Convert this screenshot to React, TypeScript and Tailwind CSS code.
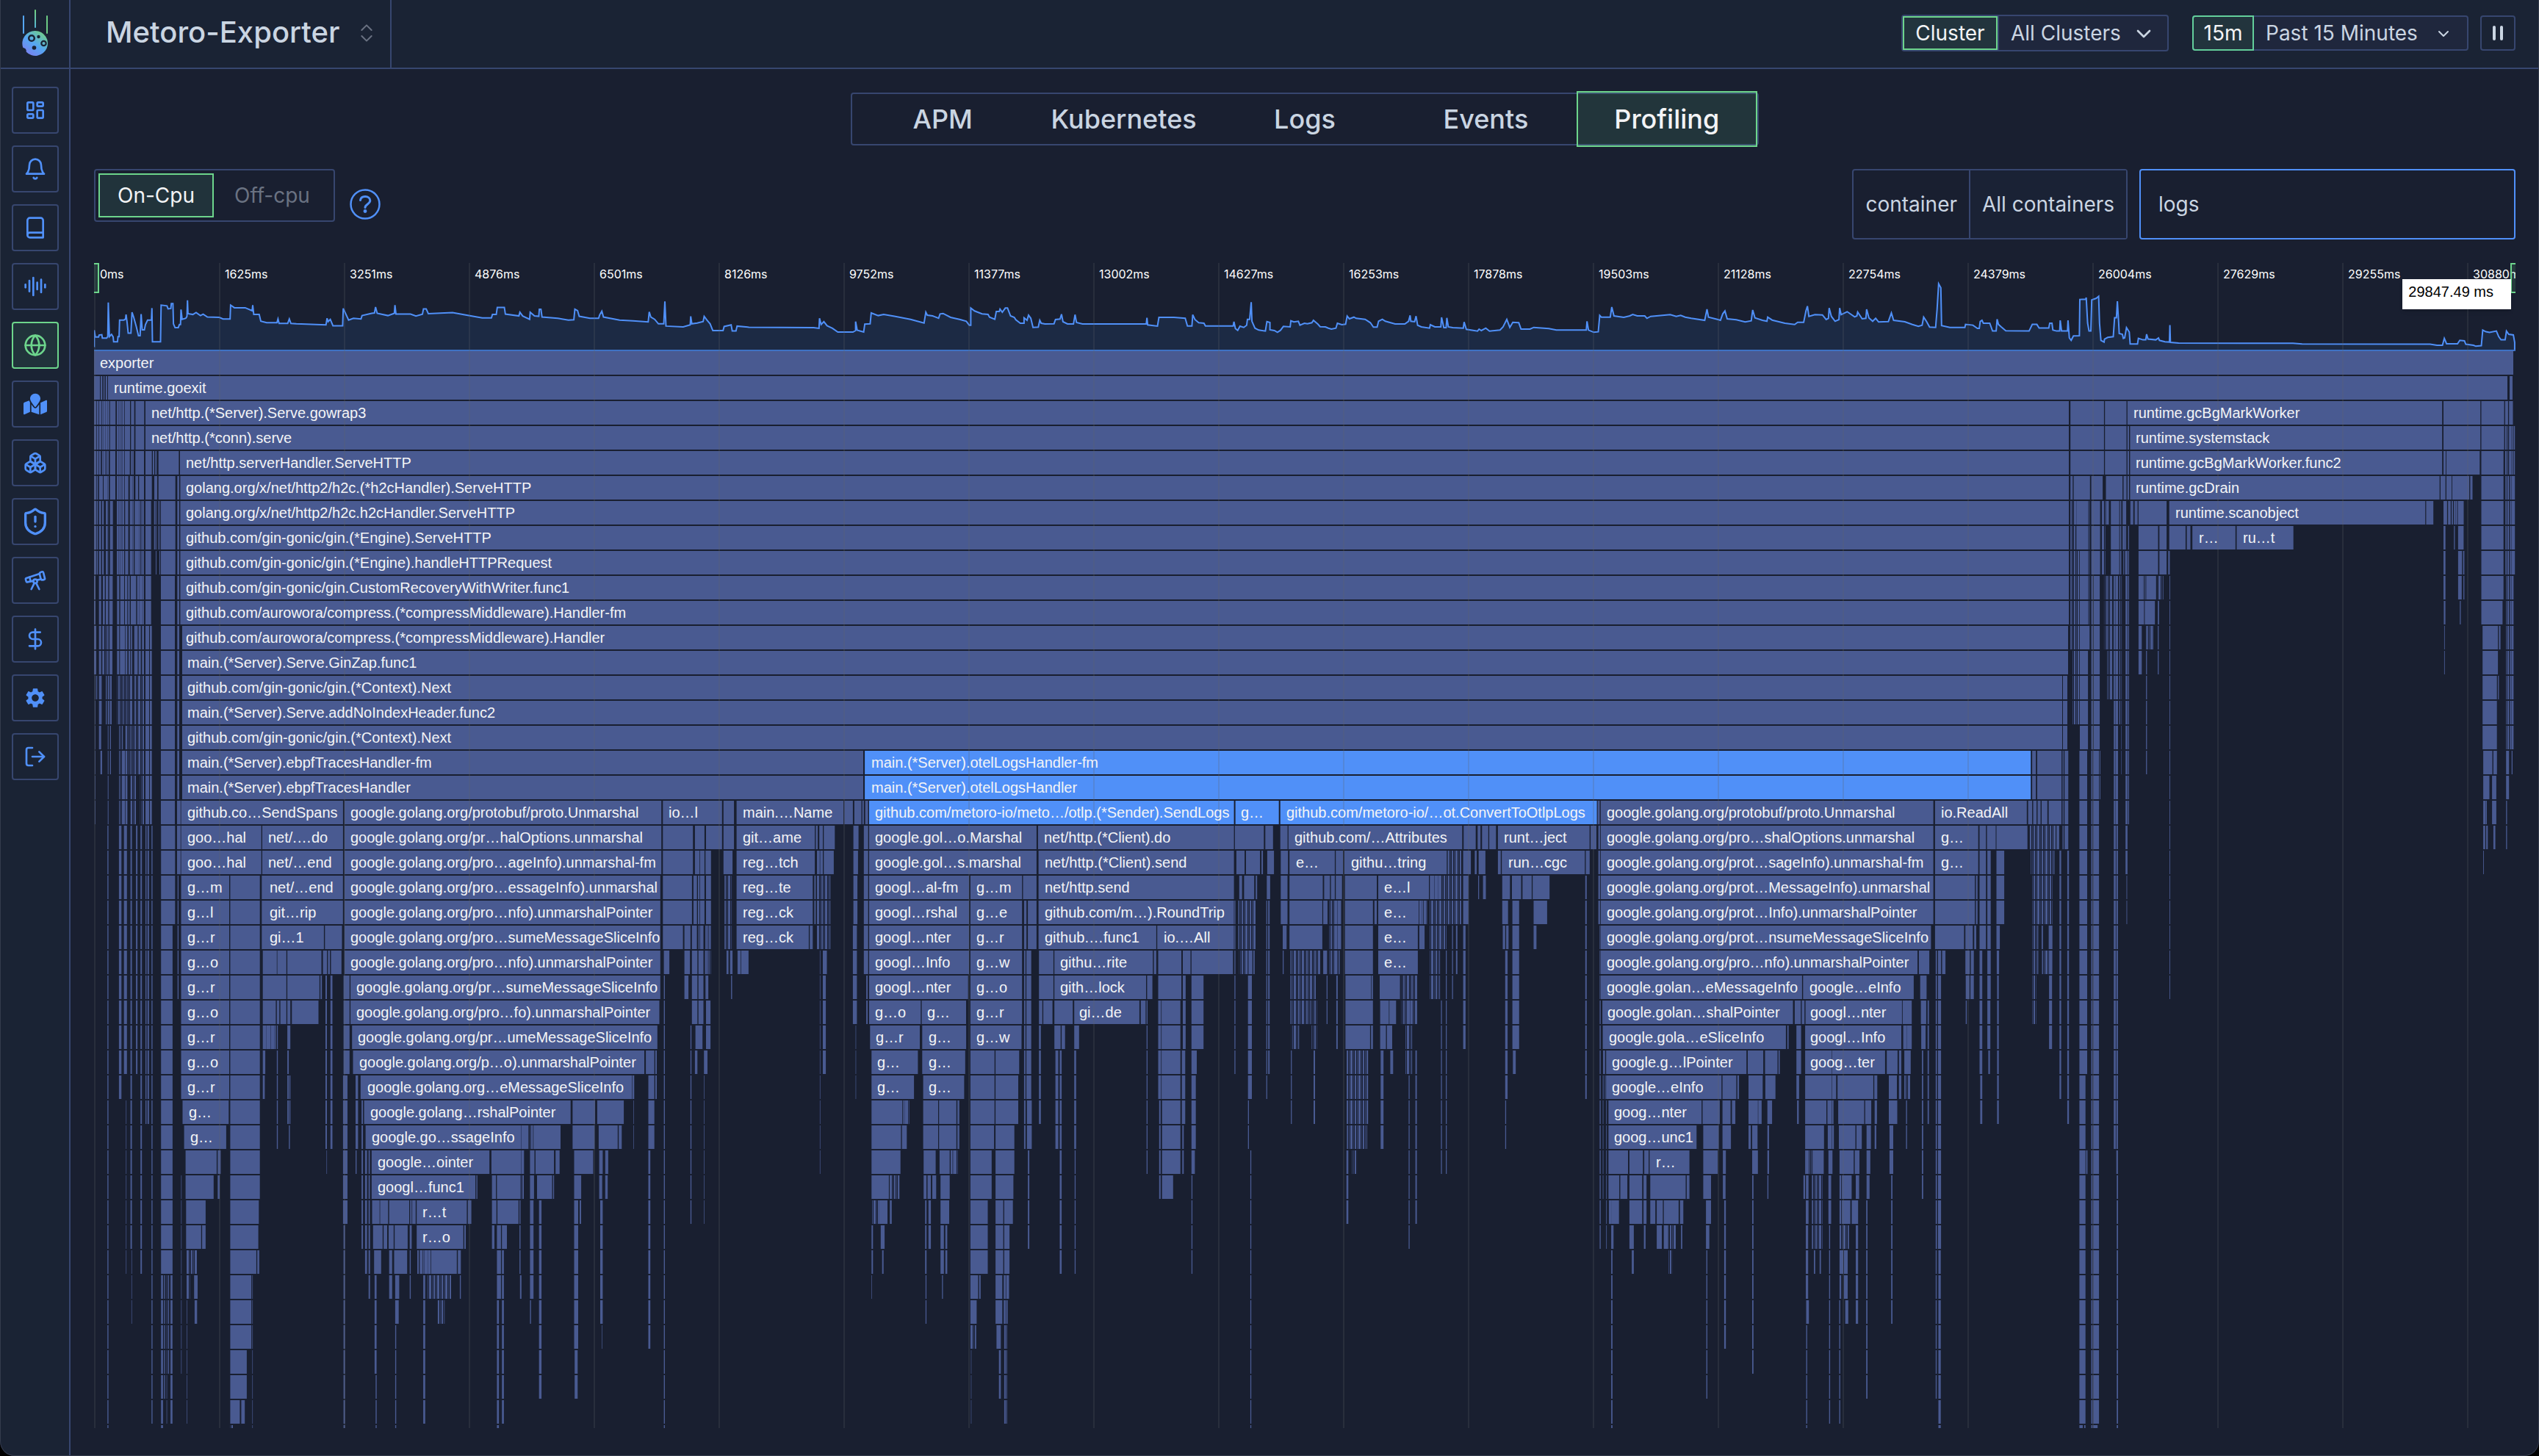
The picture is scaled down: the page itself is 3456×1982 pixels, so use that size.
import React, { FC, ReactNode } from "react";
import {
  AudioLines,
  Boxes,
  ChevronDown,
  ChevronsUpDown,
  DollarSign,
  Globe,
  LogOut,
  ShieldAlert,
  Telescope,
} from "lucide-react";
import { TbLayoutDashboard } from "react-icons/tb";
import { FaMapMarked } from "react-icons/fa";
import { MdSettings } from "react-icons/md";

const WIDTH = 3296;
const HEIGHT = 1586;
const FLAME_TOP = 120;
const ROW = 34;
const TICK = 170;

const ticks = [
  0, 1625, 3251, 4876, 6501, 8126, 9752, 11377, 13002, 14627, 16253, 17878, 19503, 21128, 22754,
  24379, 26004, 27629, 29255, 30880,
];

// A slice of the flame graph. Frames are "from to firstRow lastRow" in slice units.
type Slice = {
  start: number;
  scale: number;
  frames?: string;
  hot?: string;
  striped?: string;
  cuts?: string;
  labels?: [number, number, string][];
};

const slices: Slice[] = [
  {
    start: -128,
    scale: 1,
    frames: `128 3421 0,128 3413 1,3416 3420 1,198 2816 2 3,245 2816 4 10,248 2815 11 12,
      248 2807 13 15,2808 2814 13 15,248 1175 16 17`,
    cuts: `136 137 1,139 140 1,141 142 1,143 144 1,146 147 1`,
    labels: [
      [136, 0, "exporter"],
      [155, 1, "runtime.goexit"],
      [206, 2, "net/http.(*Server).Serve.gowrap3"],
      [206, 3, "net/http.(*conn).serve"],
      [253, 4, "net/http.serverHandler.ServeHTTP"],
      [253, 5, "golang.org/x/net/http2/h2c.(*h2cHandler).ServeHTTP"],
      [253, 6, "golang.org/x/net/http2/h2c.h2cHandler.ServeHTTP"],
      [253, 7, "github.com/gin-gonic/gin.(*Engine).ServeHTTP"],
      [253, 8, "github.com/gin-gonic/gin.(*Engine).handleHTTPRequest"],
      [253, 9, "github.com/gin-gonic/gin.CustomRecoveryWithWriter.func1"],
      [253, 10, "github.com/aurowora/compress.(*compressMiddleware).Handler-fm"],
      [253, 11, "github.com/aurowora/compress.(*compressMiddleware).Handler"],
      [255, 12, "main.(*Server).Serve.GinZap.func1"],
      [255, 13, "github.com/gin-gonic/gin.(*Context).Next"],
      [255, 14, "main.(*Server).Serve.addNoIndexHeader.func2"],
      [255, 15, "github.com/gin-gonic/gin.(*Context).Next"],
      [255, 16, "main.(*Server).ebpfTracesHandler-fm"],
      [255, 17, "main.(*Server).ebpfTracesHandler"],
    ],
  },
  {
    start: -128,
    scale: 1 / 3,
    frames: `384 589 2 3,384 412 4,416 432 4,434 444 4,449 471 4,477 530 4,535 546 4,553 588 4,
      594 620 4,624 630 4,634 640 4,647 730 4,
      384 400 5,403 420 5,423 444 5,449 471 5,477 524 5,530 546 5,553 564 5,568 588 5,594 620 5,630 642 5,
      647 716 5,724 732 5 18,384 400 6 8,403 413 6 8,417 424 6 8,432 442 6 8,449 461 6 8,477 508 6 8,
      511 524 6 8,530 546 6 8,550 574 6 8,577 588 6 8,594 617 6 8,629 634 6 7,636 639 6 8,645 648 6 7,
      651 654 6 8,657 716 6 8,384 390 9 10,404 413 9 12,420 428 9 10,432 442 9 10,446 460 9 10,
      478 487 9 12,491 507 9 10,510 520 9 10,523 530 9 10,534 556 9 10,560 588 9 10,594 617 9 10,
      657 714 9 18,384 393 11 12,418 426 11 12,431 434 11 12,437 443 11 12,447 459 11 12,490 510 11 12,
      512 520 11 12,525 532 11 12,535 540 11 12,548 562 11 12,566 575 11 12,580 588 11 12,
      594 609 11 18,612 620 11 18,388 390 13 18,393 397 13,404 415 13 14,432 436 13 14,440 446 13 14,
      449 456 13 14,404 413 15,410 417 16,440 443 15 18,449 453 15 16,512 520 15 18,501 510 16 18`,
    striped: `478 500 13 14,503 520 13 14,524 540 13 14,545 560 13 14,562 588 13 14,486 502 15 18,
      524 534 15 16,537 560 15 16,565 590 15 16,533 556 17 18,572 590 17 18`,
    cuts: `394 396 2 8,403 405 2 8,415 417 2 4,420 421 2 5,430 431 2 4,438 439 2 8,446 449 2 3,
      472 477 2 3,484 485 2 8,490 491 2 8,497 498 2 7,500 501 2 8,508 510 2 8,531 535 2 3,
      540 541 4 8,548 553 2 3,569 570 6 10,582 583 6 10,734 736 5 18,740 741 11 18`,
  },
  {
    start: -18,
    scale: 0.6824,
    frames: `53 55 19 43,76 81 19 29,86 92 19 28,90 91 30 36,99 102 19 35,101 102 36 38,110 113 19 28,
      119 122 19 36,129 131 19 30,133 136 19 30,141 143 19 42,
      160 188 19 22,160 183 23 36,160 164 37 43,166 168 37 41,171 172 37 42,174 176 37 40,179 183 37 42,
      192 199 18 20,193 195 21 25,200 201 33 40,211 212 38 42,
      200 523 18,526 1158 18,1161 1279 18,1282 1303 18,1308 1521 18,1523 1540 18,1543 1557 18,
      200 360 19 20,362 523 19 20,526 1158 19 20,1161 1221 19 20,1225 1244 19 20,1247 1279 19,
      1282 1303 19,1308 1464 19 20,1466 1470 19,1473 1480 19 20,1482 1504 19,1541 1549 19 22,
      1246 1257 20,1282 1300 20,1482 1502 20,200 296 21 29,298 357 21 33,361 523 21 22,526 1156 21 24,
      1161 1219 21 22,1222 1229 21 22,1231 1244 21 22,1247 1257 21 22,1308 1460 21 22,1463 1466 21 22,
      361 485 23,487 521 23,1161 1201 23,1204 1216 23,1219 1229 23,1232 1242 23 26,1246 1256 23,
      1308 1452 23,1454 1460 23,363 410 24 25,412 480 24,483 491 24,493 497 24,499 520 24,1163 1174 24,
      1204 1215 24,1219 1230 24 26,1245 1254 24,1288 1292 24,1295 1300 24,1310 1316 24,1317 1332 24,
      1480 1488 24,412 476 25,478 481 25,488 491 25 31,498 502 25 31,524 536 25 28,538 1156 25,
      1163 1165 25 43,1204 1212 25,1246 1252 25,1297 1299 25,1474 1475 24 32,1480 1486 25 28,1540 1548 23 26,
      363 389 26,391 396 26,398 410 26,412 418 26,421 474 26,538 1154 26,1247 1256 26 27,
      363 389 27,391 393 27 31,412 418 27,541 1150 27,1226 1240 27,1225 1230 28,1243 1250 28,
      363 368 28,412 415 28 30,415 417 31,543 1124 28,1127 1144 28,1146 1149 28 29,363 367 29,523 532 29 34,
      548 553 29 31,558 1099 29,1100 1104 29,1132 1144 29 31,203 295 30,565 977 30,981 1026 30,
      1030 1083 30,206 290 31,568 893 31,896 957 31,981 1025 31,1033 1071 31,1073 1079 31,
      209 271 32,273 279 32,560 563 30 35,567 571 32 36,574 577 32 37,580 815 32,819 884 32,896 905 32,
      907 944 32,947 955 32,984 1022 32,1034 1041 32,1046 1052 32,209 265 33,273 277 33,580 787 33,
      789 791 33,820 828 33,830 877 33,896 904 33,910 940 33,942 944 33,984 998 33,1034 1040 33,
      1046 1051 33,210 249 34,298 355 34,581 613 34,615 655 34,657 668 34,670 770 34,772 779 34,
      820 829 34,831 873 34,875 877 34 36,984 992 34 39,995 998 34,210 240 35,242 249 35,298 354 35,
      583 602 35,604 611 35,614 624 35,626 652 35,656 660 35,670 763 35,765 768 35,820 825 35,
      830 838 35 37,840 850 35,298 350 36,352 356 36,585 599 36,615 621 36 37,625 651 36,656 658 36 37,
      677 697 36,699 750 36,752 758 36,840 844 36 42,226 233 37,298 340 37 39,342 343 37 43,586 590 37 40,
      627 635 37,683 687 37 42,756 758 37,227 232 38,627 634 38,627 629 39 43,588 590 41 43,830 834 38 43,
      298 331 40 41,298 317 42,320 327 42,524 527 35 43,876 879 37,896 903 34 37,896 898 38,
      914 919 34 41,985 991 40 41,1036 1041 34 38,1039 1040 39,1132 1136 32 39,1216 1218 27 34,
      1243 1244 29 34,1102 1103 30 31,416 418 29 30,490 491 32,548 550 32`,
    striped: `1246 1257 23 24,1284 1300 21 23,1468 1480 20 23,1481 1495 21 23,365 388 27,211 233 36,
      211 218 37,670 698 36,690 739 37,712 727 38,298 304 43,876 884 31 33`,
    cuts: `1234 1235 20 23,1252 1253 23 25,897 898 31,902 903 31,1027 1029 30,391 392 24,
      577 579 32 34,660 661 34,682 683 36,596 597 34`,
    labels: [
      [213, 18, "github.co…SendSpans"],
      [538, 18, "google.golang.org/protobuf/proto.Unmarshal"],
      [1172, 18, "io…l"],
      [1320, 18, "main.…Name"],
      [213, 19, "goo…hal"],
      [374, 19, "net/.…do"],
      [538, 19, "google.golang.org/pr…halOptions.unmarshal"],
      [1321, 19, "git…ame"],
      [213, 20, "goo…hal"],
      [374, 20, "net/…end"],
      [538, 20, "google.golang.org/pro…ageInfo).unmarshal-fm"],
      [1321, 20, "reg…tch"],
      [213, 21, "g…m"],
      [376, 21, "net/…end"],
      [538, 21, "google.golang.org/pro…essageInfo).unmarshal"],
      [1321, 21, "reg…te"],
      [213, 22, "g…l"],
      [376, 22, "git…rip"],
      [538, 22, "google.golang.org/pro…nfo).unmarshalPointer"],
      [1321, 22, "reg…ck"],
      [213, 23, "g…r"],
      [376, 23, "gi…1"],
      [538, 23, "google.golang.org/pro…sumeMessageSliceInfo"],
      [1321, 23, "reg…ck"],
      [213, 24, "g…o"],
      [538, 24, "google.golang.org/pro…nfo).unmarshalPointer"],
      [213, 25, "g…r"],
      [550, 25, "google.golang.org/pr…sumeMessageSliceInfo"],
      [213, 26, "g…o"],
      [550, 26, "google.golang.org/pro…fo).unmarshalPointer"],
      [213, 27, "g…r"],
      [553, 27, "google.golang.org/pr…umeMessageSliceInfo"],
      [213, 28, "g…o"],
      [556, 28, "google.golang.org/p…o).unmarshalPointer"],
      [213, 29, "g…r"],
      [571, 29, "google.golang.org…eMessageSliceInfo"],
      [216, 30, "g…"],
      [578, 30, "google.golang…rshalPointer"],
      [219, 31, "g…"],
      [580, 31, "google.go…ssageInfo"],
      [592, 32, "google…ointer"],
      [592, 33, "googl…func1"],
      [682, 34, "r…t"],
      [682, 35, "r…o"],
    ],
  },
  {
    start: 1032,
    scale: 0.6569,
    hot: `26 2442 16 17,35 791 18,794 884 18,887 1543 18`,
    frames: `21 24 18,27 33 18,5 13 19,24 33 19 24,5 12 20,7 8 21 29,29 32 25 26,
      35 382 19 20,385 791 19,793 853 19,856 872 19,887 902 19,904 1264 19,1267 1292 19,1296 1302 19,
      1305 1318 19,1320 1334 19,1338 1528 19,1530 1542 19,386 791 20 22,796 813 20,816 845 20,848 851 20,
      860 874 20,888 903 20,906 1000 20,1002 1017 20,1020 1232 20,1266 1282 20,1290 1294 20,1298 1312 20,
      1338 1344 20,1346 1518 20,1520 1528 20,35 242 21 24,245 352 21 26,354 382 21,802 808 21,812 833 21,
      836 839 21,859 866 21,888 902 21,906 975 21,978 990 21,992 1000 21,1002 1015 21,1021 1087 21,
      1090 1195 21,1198 1218 21,1266 1277 21,1297 1299 21,1307 1313 21,1347 1363 21,1367 1386 21,
      1389 1408 21,1410 1445 21,1519 1522 21 29,356 361 22 23,364 382 22 23,888 902 22,906 974 22 23,
      976 985 22,1003 1013 22 23,1021 1079 22 24,1082 1087 22,1090 1174 22,1177 1191 22,1266 1277 22,
      1347 1359 22,1368 1382 22 27,1412 1440 22,386 630 23,632 791 23,892 900 23,1090 1172 23 24,
      1175 1186 23,1348 1353 23,1355 1360 23,1412 1418 23,356 359 24 31,361 371 24 29,387 417 24 25,
      419 623 24,625 630 24,634 682 24 25,685 701 24,703 789 24,892 894 24,976 984 24,1266 1271 23 27,
      1353 1358 24 29,1353 1355 30 31,1369 1375 28,35 240 25,419 609 25,611 622 25,685 691 25 27,703 728 25 27,
      1093 1135 25,1022 1079 25 26,35 142 26,144 236 26,387 394 26,396 415 26,419 457 26,460 595 26,
      598 608 26,634 680 26 29,1094 1127 26,1149 1160 26,37 140 27,145 236 27,245 351 27,387 391 27 30,
      419 432 27,434 441 27,460 470 27,1022 1073 27,1075 1079 27,1094 1106 27,1108 1119 27,
      40 136 28,145 234 28,245 295 28,297 346 28,421 427 28 31,430 434 28 36,460 464 28 31,
      461 463 32 36,683 690 28 30,703 714 28,1095 1101 28 31,40 128 29,147 232 29,245 295 29,297 344 29 30,
      703 712 29 31,40 104 30,106 116 30,147 178 30 31,180 216 30 31,218 222 30 31,245 295 30,
      362 372 30 31,642 680 30 32,636 639 30 33,40 101 31,103 113 31,245 294 31,297 336 31,684 687 31 32,
      40 100 32,148 173 32,181 202 32,204 208 32,210 215 32,245 289 32 33,297 336 32,364 367 32 35,
      703 710 32,703 705 33 36,40 76 33,148 154 33,156 163 33,166 174 33,183 202 33,297 334 33,
      642 665 33,78 82 33 34,56 73 34,183 201 34,245 281 34 36,297 313 34 36,315 333 34,
      40 43 35 36,59 67 35,151 154 34 36,158 163 34 35,183 190 35 36,193 197 35 36,315 326 35 36,62 65 36,
      245 261 37,263 266 37,297 311 37 38,314 325 37,245 258 38,314 322 38,299 308 39,304 308 40 41,
      315 321 39 42,246 247 40 42,40 41 37,186 188 37,152 154 37 38,
      610 612 26 32,825 827 32 43,820 828 24 29,820 822 30 31,858 860 22 29,862 865 22 28,792 794 22 28,
      1220 1222 26 32,1230 1232 24 32,1153 1155 29 35,1167 1170 28 34,1024 1028 32 34,1115 1121 28,
      956 959 28 30,909 911 28 30,983 985 25 26,1003 1006 24 27,1243 1245 23 25,1251 1254 23 24`,
    striped: `1234 1262 20 22,800 836 22 23,802 834 24,1195 1232 21 23,1197 1218 24 25,1242 1262 21,
      908 971 24,908 962 25,908 950 26,952 963 26 27,910 926 27,1137 1172 25 26,1145 1160 27 28,
      1023 1069 28 30,1025 1067 31,1036 1046 32,78 98 33,40 56 34,106 120 30,245 257 39,208 220 32,
      988 1010 22 24,1174 1190 22`,
    cuts: `640 641 26 32,318 319 37 42,1183 1184 22,1112 1113 26,1075 1076 25,922 923 25`,
    labels: [
      [39, 16, "main.(*Server).otelLogsHandler-fm"],
      [39, 17, "main.(*Server).otelLogsHandler"],
      [47, 18, "github.com/metoro-io/meto…/otlp.(*Sender).SendLogs"],
      [806, 18, "g…"],
      [899, 18, "github.com/metoro-io/…ot.ConvertToOtlpLogs"],
      [47, 19, "google.gol…o.Marshal"],
      [398, 19, "net/http.(*Client).do"],
      [916, 19, "github.com/…Attributes"],
      [1351, 19, "runt…ject"],
      [47, 20, "google.gol…s.marshal"],
      [399, 20, "net/http.(*Client).send"],
      [920, 20, "e…"],
      [1034, 20, "githu…tring"],
      [1360, 20, "run…cgc"],
      [47, 21, "googl…al-fm"],
      [257, 21, "g…m"],
      [399, 21, "net/http.send"],
      [1102, 21, "e…l"],
      [47, 22, "googl…rshal"],
      [257, 22, "g…e"],
      [399, 22, "github.com/m…).RoundTrip"],
      [1102, 22, "e…"],
      [47, 23, "googl…nter"],
      [257, 23, "g…r"],
      [399, 23, "github.…func1"],
      [645, 23, "io.…All"],
      [1102, 23, "e…"],
      [47, 24, "googl…Info"],
      [257, 24, "g…w"],
      [431, 24, "githu…rite"],
      [1102, 24, "e…"],
      [47, 25, "googl…nter"],
      [257, 25, "g…o"],
      [431, 25, "gith…lock"],
      [47, 26, "g…o"],
      [156, 26, "g…"],
      [257, 26, "g…r"],
      [471, 26, "gi…de"],
      [49, 27, "g…r"],
      [158, 27, "g…"],
      [257, 27, "g…w"],
      [52, 28, "g…"],
      [158, 28, "g…"],
      [52, 29, "g…"],
      [159, 29, "g…"],
    ],
  },
  {
    start: 2032,
    scale: 0.4592,
    frames: `1320 1331 16 17,1335 1407 16 17,1410 1413 16 17,1416 1427 16 17,32 38 18,41 1027 18 22,
      1032 1304 18,1308 1320 18,1323 1333 18,1336 1345 18,1348 1365 18,1369 1407 18,1410 1413 18 19,
      1416 1427 18 19,34 39 19 22,1032 1160 19 20,1164 1183 19 20,1186 1212 19,1214 1306 19,
      1392 1400 19,1187 1197 20 25,1214 1237 20 22,1401 1406 20 29,1424 1429 20 30,1032 1150 21 22,
      1153 1158 21 22,1164 1183 21 23,41 1020 23,38 40 23 25,1032 1118 23,1122 1144 23,1148 1154 23,
      1214 1224 23,1369 1380 23,1348 1352 23,41 980 24,984 1015 24,1034 1050 24,1053 1063 24,1122 1135 24,
      1138 1147 24,1215 1222 24,41 638 25,641 969 25,988 1007 25,1123 1134 25,1137 1147 25,
      1164 1172 24 28,1216 1221 25 30,1034 1050 25 35,1034 1037 36 41,1042 1049 36 43,
      46 611 26,616 634 26,637 645 26,648 934 26,936 963 26,990 1006 26,1187 1196 26 27,
      47 590 27,594 598 27,621 635 27 28,647 932 27,938 963 27,991 1004 27,48 54 28,57 473 28,
      477 523 28,528 565 28,568 572 28,647 884 28,889 921 28,925 932 28 29,941 960 28,
      57 399 29,402 443 29,446 451 29,479 521 29,529 559 29,621 629 29,623 628 30,647 739 29,743 849 29,
      852 861 29,895 919 29,64 340 30,343 394 30,402 426 30,430 440 30,479 518 30,535 549 30,
      647 710 30,713 731 30,745 822 30,825 843 30,853 860 30,895 920 30,64 325 31,345 391 31,402 427 31,
      479 486 31,490 506 31,535 540 31 32,647 703 31,714 732 31,747 796 31,799 815 31,829 842 31,
      853 858 31,897 908 31,64 122 32,126 166 32,170 183 32,186 304 32,345 388 32,403 412 32,
      490 507 32,647 662 32,665 702 32,716 728 32,749 791 32,794 808 32,829 840 32,897 908 32,
      64 96 33,99 120 33,126 164 33 34,168 177 33 34,188 293 33,296 304 33,345 368 33,403 411 33,
      649 657 33 34,749 785 33,797 807 33,829 838 33,902 906 33 38,72 95 34,188 203 34,207 225 34,
      228 272 34,276 286 34,353 368 34,749 781 34,785 804 34,72 79 35,126 139 35,169 174 35,207 222 35,
      228 241 35,279 283 35,353 363 35,649 656 35 37,133 139 36,72 76 36 43,673 677 36,690 694 36,
      797 804 35 38,749 760 36,762 773 36 37,749 754 37,650 658 38,650 653 39 43,766 775 38,
      38 41 26 35,47 49 29 33,57 59 30 35,354 357 36 41,407 412 34 39,490 494 33 40,535 538 33,
      716 724 33 34,718 721 35 42,748 751 38 42,828 832 34 41,946 949 30 31,993 997 28 33,
      1010 1014 26 30,1166 1172 29 30,1190 1195 28,1123 1126 26,1460 1483 16 28,1460 1478 29 42,1480 1484 32,
      1495 1518 16 42,1460 1470 43,1474 1478 43,1495 1514 43,1520 1522 16 17,1370 1379 24 27`,
    striped: `1313 1390 19,1316 1386 20,1320 1380 21 22,1320 1338 23 24,1320 1332 25 26,1349 1380 24,
      243 264 35,241 253 36,667 701 33 35,642 650 33,749 777 35,941 960 29,48 56 29,938 950 27,
      64 72 34`,
    cuts: `1038 1041 24 35,1499 1501 16 43,658 660 32,667 669 32,726 727 28 31,754 756 33 35,507 508 30`,
    labels: [
      [58, 18, "google.golang.org/protobuf/proto.Unmarshal"],
      [1050, 18, "io.ReadAll"],
      [58, 19, "google.golang.org/pro…shalOptions.unmarshal"],
      [1050, 19, "g…"],
      [58, 20, "google.golang.org/prot…sageInfo).unmarshal-fm"],
      [1050, 20, "g…"],
      [58, 21, "google.golang.org/prot…MessageInfo).unmarshal"],
      [58, 22, "google.golang.org/prot…Info).unmarshalPointer"],
      [58, 23, "google.golang.org/prot…nsumeMessageSliceInfo"],
      [58, 24, "google.golang.org/pro…nfo).unmarshalPointer"],
      [58, 25, "google.golan…eMessageInfo"],
      [660, 25, "google…eInfo"],
      [62, 26, "google.golan…shalPointer"],
      [663, 26, "googl…nter"],
      [65, 27, "google.gola…eSliceInfo"],
      [663, 27, "googl…Info"],
      [73, 28, "google.g…lPointer"],
      [663, 28, "goog…ter"],
      [73, 29, "google…eInfo"],
      [81, 30, "goog…nter"],
      [81, 31, "goog…unc1"],
      [204, 32, "r…"],
    ],
  },
  {
    start: 2632,
    scale: 0.4439,
    frames: `131 234 2 4,237 303 2 4,306 1271 2,306 311 3 5,314 1271 3 4,1275 1388 2 3,1391 1461 2 3,
      1464 1473 2 4,1476 1488 2 4,1490 1494 3 8,1275 1282 4,1284 1386 4,1391 1459 4 9,131 138 5,141 191 5,
      195 230 5,240 291 5,294 303 5,314 1263 5,1266 1281 5,1284 1300 5,1302 1354 5,1357 1364 5,
      1465 1476 5 8,1479 1490 5 15,146 190 6,195 222 6 8,240 249 6,255 287 6 8,291 302 6 7,315 324 6,
      328 337 6,340 426 6,434 1219 6,1222 1244 6,1275 1286 6,1289 1297 6,1300 1304 6,1307 1317 6,
      1319 1337 6,150 190 7,340 400 7 8,404 426 7 8,434 484 7,488 499 7,505 637 7,641 815 7,
      1275 1281 7 9,1307 1310 7,1320 1337 7,160 190 8 11,431 436 8,1320 1332 8,1335 1339 8,
      340 358 9,361 394 9,1320 1331 9,1336 1339 9,195 221 9 15,340 357 10,359 390 10,399 403 10,
      1276 1281 10,1325 1328 10,1391 1456 10,340 350 11 12,363 366 11 16,382 385 11,399 402 11 12,
      1277 1279 11 12,1395 1442 11 12,1445 1450 11,1395 1439 13 15,1442 1445 13,160 185 12 15,
      264 277 9 18,264 270 19 31,272 277 19 32,273 277 33 43,300 306 8 20,308 311 7 18,303 305 21 22,
      435 437 9 25,1397 1425 16,1428 1439 16,1397 1416 17,1424 1437 17 18,1397 1408 18,1397 1403 19,
      1406 1411 19,1428 1434 19,1397 1399 20,1467 1476 9 15,1467 1476 16 17,1467 1470 18 19,1484 1487 16`,
    striped: `131 158 6 8,225 240 6 8,131 158 9 11,136 158 12 14,244 262 9 11,234 246 9 11,
      244 262 12 13,281 291 9 14,398 416 9,366 382 11,293 300 7 8,285 290 15 16`,
    cuts: `1483 1484 3 15,1469 1471 3 15,281 283 6 8,186 188 6 10,1311 1312 6,355 356 9,364 365 9,
      268 269 9 18,200 202 9 15,1419 1420 17,1404 1405 18`,
    labels: [
      [325, 2, "runtime.gcBgMarkWorker"],
      [331, 3, "runtime.systemstack"],
      [331, 4, "runtime.gcBgMarkWorker.func2"],
      [331, 5, "runtime.gcDrain"],
      [453, 6, "runtime.scanobject"],
      [524, 7, "r…"],
      [659, 7, "ru…t"],
    ],
  },
];

// CPU usage samples, one run per stretch of the timeline.
const usage = [
  {
    x0: -18,
    kx: 0.7334,
    ky: 0.5102,
    y0: -8,
    points: `25,240 25,195 27,213 33,213 34,208 39,207 40,216 48,216 50,212 51,121 53,212 57,206 60,213 61,226 68,226 69,212 71,212 72,168 80,168 83,165 84,153 86,176 88,203 93,203 95,147 98,160 103,185 107,210 110,210 112,152 114,194 118,194 120,180 124,168 131,168 132,136 133,226 148,226 149,128 160,130 162,138 167,137 168,124 171,124 172,178 175,188 181,188 183,180 185,180 186,140 188,166 195,163 197,158 198,115 199,151 208,153 214,148 222,156 227,152 235,160 257,161 264,165 277,165 278,128 285,135 305,135 318,143 319,128 321,153 331,153 334,171 345,175 364,175 366,165 368,177 384,177 387,165 390,177 400,178 455,181 457,163 459,172 463,166 468,183 486,183 487,137 492,152 497,168 506,163 520,165 522,156 540,150 545,149 547,133 550,150 570,156 582,150 583,128 585,152 612,152 622,157 634,152 636,138 641,138 645,151 690,148 720,156 745,162 762,162 764,153 771,153 773,134 786,134 788,152 813,157 815,147 820,157 833,166 834,147 842,157 850,158 851,139 854,139 856,160 885,163 905,168 915,167 917,139 922,143 925,158 945,163 961,163 963,154 967,144 970,160 1000,168 1025,170 1053,173 1055,146 1058,160 1065,166 1072,178 1082,178 1084,118 1086,184 1118,186 1131,181 1132,158 1134,178 1144,176 1155,172 1157,158 1162,168 1168,178 1173,196 1192,196 1194,185 1207,181 1209,197 1216,197 1218,184 1240,187 1360,188 1370,190 1371,163 1374,180 1379,172 1385,183 1395,190 1405,200 1433,200 1438,196 1438,172 1441,195 1453,200 1455,179 1465,178 1467,149 1480,156 1490,153 1510,158 1540,166 1565,176`,
  },
  {
    x0: 1072,
    kx: 1.0204,
    ky: 0.3333,
    y0: -8,
    points: `59,225 61,237 68,240 76,250 78,232 82,230 92,246 105,255 113,262 117,278 119,278 119,208 124,220 134,232 142,234 144,245 151,254 153,222 157,222 158,212 161,225 165,208 168,208 172,240 177,246 179,256 185,270 190,270 190,248 194,258 196,237 199,250 202,287 209,286 211,258 213,270 218,273 230,272 232,255 238,253 240,233 242,264 248,273 256,273 258,235 260,267 268,273 353,273 354,248 355,277 368,282 370,246 390,246 405,250 408,281 414,281 415,235 418,255 423,268 430,270 432,281 469,281 470,264 472,292 475,299 478,282 483,287 487,278 488,254 491,254 493,184 494,262 498,290 503,298 512,302 514,263 518,267 518,297 524,300 528,307 532,299 536,283 545,285 546,260 550,265 556,262 558,278 564,270 568,272 574,268 576,258 582,274 585,284 592,285 596,290 600,294 606,290 608,270 614,276 619,274 621,241 624,252 630,245 633,250 645,254 652,268 656,286 661,286 663,262 668,254 672,262 685,273 698,273 703,262 705,238 706,262 711,264 713,241 715,278 720,285 731,290 732,276 738,285 746,285 747,246 750,288 753,288 754,248 756,285 762,288 776,290 777,265 780,295 795,302 797,294 800,300 806,290 811,302 825,298 829,285 834,254 838,287 842,266 850,268 853,294 865,294 870,287 890,292 900,298 940,298 941,262 943,298 950,307 956,305 958,238 960,245 972,245 974,204 977,240 990,246 998,240 1002,234 1008,240 1018,240 1021,250 1026,242 1052,235 1060,242 1066,238 1072,245 1080,250 1098,258 1101,213 1103,245 1115,254 1119,258 1122,232 1125,220 1128,252 1140,256 1152,265 1160,260 1162,216 1165,248 1175,258 1181,262 1182,245 1188,257 1205,270 1218,275 1222,266 1230,266 1233,220 1235,200 1237,242 1245,235 1255,236 1260,255 1263,250 1264,208 1267,242 1272,262 1277,255 1278,208 1280,235 1288,223 1298,244 1301,240 1302,224 1308,252 1313,250 1314,213 1317,248 1322,262 1326,250 1330,265 1343,263 1347,228 1350,258 1365,264 1375,275 1383,283 1388,278 1390,245 1394,263 1398,286 1406,287 1408,213 1410,109 1413,125 1414,280 1425,287 1445,287`,
  },
  {
    x0: 2352,
    kx: 0.6224,
    ky: 0.3333,
    y0: -358,
    points: `314,1325 330,1328 340,1341 344,1341 346,1313 350,1308 353,1320 367,1320 373,1352 381,1352 383,1304 386,1325 392,1335 402,1351 453,1352 460,1325 470,1325 475,1340 496,1340 498,1320 503,1320 505,1348 513,1352 520,1352 521,1308 524,1352 537,1352 538,1308 541,1380 545,1390 550,1372 563,1371 564,1223 577,1222 578,1215 581,1320 584,1352 588,1352 590,1225 600,1218 605,1210 607,1320 610,1390 617,1397 618,1385 625,1378 637,1375 640,1298 644,1298 646,1230 649,1320 650,1362 657,1365 659,1382 662,1380 666,1338 672,1356 674,1405 690,1405 692,1382 702,1388 708,1388 710,1365 713,1385 730,1388 736,1380 738,1390 750,1396 760,1397 761,1328 762,1398 780,1401 1030,1402 1050,1405 1330,1406 1345,1410 1357,1410 1361,1382 1366,1404 1390,1404 1395,1390 1405,1392 1408,1406 1425,1410 1430,1414 1442,1412 1445,1348 1452,1355 1460,1358 1475,1352 1480,1375 1485,1388 1494,1388 1497,1352 1502,1365 1512,1368 1515,1398 1515,1430`,
  },
];

const usageLine = usage
  .flatMap(({ x0, kx, ky, y0, points }) =>
    points.split(" ").map((pair) => {
      const [x, y] = pair.split(",").map(Number);
      return `${(x0 + x * kx).toFixed(1)},${(y0 + y * ky).toFixed(1)}`;
    })
  )
  .join(" ");

const toPath = (slice: Slice, list = "") =>
  list
    .split(",")
    .filter((item) => item.trim())
    .map((item) => {
      const [from, to, first, last = first] = item.trim().split(/\s+/).map(Number);
      const x = slice.start + from * slice.scale;
      const width = (to - from) * slice.scale;
      let path = "";
      for (let row = first; row <= last; row++) {
        path += `M${x.toFixed(1)} ${FLAME_TOP + row * ROW}h${width.toFixed(1)}v32h-${width.toFixed(1)}z`;
      }
      return path;
    })
    .join("");

const FlameGraph: FC = () => {
  return (
    <div className="relative mt-8">
      <svg
        viewBox={`0 0 ${WIDTH} ${HEIGHT}`}
        className="block h-auto w-full overflow-hidden"
        role="img"
        aria-label="CPU flame graph"
      >
        <defs>
          <pattern id="stripes" width="11" height="34" patternUnits="userSpaceOnUse">
            <rect x="0" width="2" height="34" fill="#495a91" />
            <rect x="3" width="1" height="34" fill="#3a4879" />
            <rect x="5" width="3" height="34" fill="#495a91" />
            <rect x="9" width="1" height="34" fill="#323f6b" />
          </pattern>
        </defs>
        <polygon points={`${usageLine} 3296,118 0,118`} fill="#1c2a44" />
        <polyline points={usageLine} fill="none" stroke="#5090f8" strokeWidth="2" />
        <path d="M0 119H3296" stroke="#3f72c4" strokeWidth="2" />
        {slices.map((slice, i) => (
          <g key={i}>
            <path d={toPath(slice, slice.frames)} fill="#495a91" />
            <path d={toPath(slice, slice.hot)} fill="#5090f8" />
            <path d={toPath(slice, slice.striped)} fill="url(#stripes)" />
            <path d={toPath(slice, slice.cuts)} fill="#191f30" />
          </g>
        ))}
        {ticks.map((_, i) => (
          <path key={i} d={`M${i * TICK + 1} 0V${HEIGHT}`} stroke="#60646a" strokeOpacity="0.22" strokeWidth="2" />
        ))}
        {ticks.map((tick, i) => (
          <text key={tick} x={i * TICK + 8} y="21" className="fill-white font-[Inter,sans-serif] text-[16px]">
            {tick}ms
          </text>
        ))}
        {slices.map((slice, i) => (
          <g key={i} className="fill-gray-100 font-['Liberation_Sans',Arial,sans-serif] text-[20px]">
            {slice.labels?.map(([x, row, text]) => (
              <text key={`${x}-${row}`} x={Math.round(slice.start + x * slice.scale)} y={FLAME_TOP + row * ROW + 23}>
                {text}
              </text>
            ))}
          </g>
        ))}
        <g fill="#6dd58c" fillOpacity="0.15" stroke="#6dd58c" strokeWidth="2">
          <rect x="-4" y="1" width="10" height="39" />
          <rect x="3290" y="1" width="10" height="39" />
        </g>
      </svg>
      <div className="absolute top-[22px] right-[6px] h-[41px] bg-white pr-6 pl-2 font-['Liberation_Sans',Arial,sans-serif] text-xl leading-[34px] text-black shadow-md">
        29847.49 ms
      </div>
    </div>
  );
};

const Logo: FC = () => (
  <svg viewBox="0 0 36 66" className="h-[66px] w-9" fill="none">
    <defs>
      <linearGradient id="planet" x1="6" y1="62" x2="30" y2="30" gradientUnits="userSpaceOnUse">
        <stop stopColor="#7b7ff0" />
        <stop offset="0.45" stopColor="#55a6f2" />
        <stop offset="1" stopColor="#74d27e" />
      </linearGradient>
      <linearGradient id="trail" x1="0" y1="0" x2="0" y2="1">
        <stop stopColor="#74d27e" />
        <stop offset="1" stopColor="#55b4d8" />
      </linearGradient>
    </defs>
    <rect x="1" y="9" width="2" height="25" rx="1" fill="#55a6f2" />
    <rect x="17" y="1" width="2" height="25" rx="1" fill="url(#trail)" />
    <rect x="33" y="9" width="2" height="25" rx="1" fill="#6dca84" />
    <path
      d="M18 30a17 17 0 1 1-12.4 28.6c.6-1.6-.2-3.8-1.6-4.6-1.2-.8-2.2-.6-2.700-1.200A17.2 17.2 0 0 1 18 30z"
      fill="url(#planet)"
    />
    <circle cx="13" cy="40" r="3.8" stroke="#1a2334" strokeWidth="2.5" />
    <circle cx="29.5" cy="47" r="3.2" stroke="#1a2334" strokeWidth="2.2" />
    <circle cx="22.5" cy="38" r="2.2" fill="#1a2334" />
    <circle cx="16.5" cy="53" r="2.8" fill="#1a2334" />
  </svg>
);

const BellIcon: FC = () => (
  <svg viewBox="0 0 24 24" className="size-8" fill="none" stroke="currentColor" strokeWidth="2" strokeLinecap="round" strokeLinejoin="round">
    <path d="M6 8a6 6 0 0 1 12 0c0 7 3 9 3 9H3s3-2 3-9" />
    <path d="M10.3 21a1.94 1.94 0 0 0 3.4 0" />
  </svg>
);

const BookIcon: FC = () => (
  <svg viewBox="0 0 24 24" className="size-8" fill="none" stroke="currentColor" strokeWidth="2" strokeLinecap="round" strokeLinejoin="round">
    <path d="M4 19.5v-15A2.5 2.5 0 0 1 6.5 2h11A2.5 2.5 0 0 1 20 4.500V22H6.5a2.5 2.5 0 0 1 0-5H20" />
  </svg>
);

const navItems: { name: string; icon: ReactNode }[] = [
  { name: "Dashboards", icon: <TbLayoutDashboard className="size-8" /> },
  { name: "Alerts", icon: <BellIcon /> },
  { name: "Logs", icon: <BookIcon /> },
  { name: "Traces", icon: <AudioLines className="size-8" /> },
  { name: "Services", icon: <Globe className="size-8" /> },
  { name: "Service map", icon: <FaMapMarked className="size-8" /> },
  { name: "Kubernetes", icon: <Boxes className="size-8" /> },
  { name: "Issues", icon: <ShieldAlert className="size-10" /> },
  { name: "Explore", icon: <Telescope className="size-8" /> },
  { name: "Billing", icon: <DollarSign className="size-8" /> },
  { name: "Settings", icon: <MdSettings className="size-8" /> },
  { name: "Log out", icon: <LogOut className="size-8" /> },
];

const Sidebar: FC = () => (
  <aside className="flex w-24 shrink-0 flex-col border-r-2 border-[#37466f] bg-[#1a2334]">
    <a href="#home" aria-label="Home" className="flex h-[94px] items-start justify-center border-b-2 border-[#37466f] pt-3 pl-0.5">
      <Logo />
    </a>
    <nav className="flex flex-col gap-4 py-6 pl-4">
      {navItems.map(({ name, icon }) => (
        <a
          key={name}
          href="#nav"
          aria-label={name}
          className={
            name === "Services"
              ? "flex size-16 items-center justify-center rounded border-2 border-[#6dd58c] bg-[#21333b] text-[#6dd58c]"
              : "flex size-16 items-center justify-center rounded border-2 border-[#37466f] text-[#5090f8]"
          }
        >
          {icon}
        </a>
      ))}
    </nav>
  </aside>
);

const Header: FC = () => (
  <header className="flex h-[94px] items-stretch justify-between border-b-2 border-[#37466f] bg-[#1a2334] text-[28px] text-slate-300">
    <div className="relative flex border-r-2 border-[#37466f]">
      <select aria-label="Service" className="w-[435px] appearance-none pb-1 pl-12 text-[40px] font-medium outline-none">
        <option>Metoro-Exporter</option>
      </select>
      <ChevronsUpDown className="pointer-events-none absolute top-[29px] right-4 size-8 text-gray-500" strokeWidth={1.5} />
    </div>
    <div className="flex items-center pr-8 pb-[2px]">
      <div className="flex h-[50px] rounded border-2 border-[#37466f] bg-[#1f273d]">
        <label
          htmlFor="cluster"
          className="flex w-[129px] items-center justify-center border-2 border-[#6dd58c] bg-[#22343d] text-gray-100"
        >
          Cluster
        </label>
        <div className="relative flex border-l-2 border-[#37466f]">
          <select id="cluster" className="w-[229px] appearance-none pl-4 outline-none">
            <option>All Clusters</option>
          </select>
          <ChevronDown className="pointer-events-none absolute top-[8px] right-4 size-8" />
        </div>
      </div>
      <div className="ml-8 flex h-12 rounded border-2 border-[#37466f] bg-[#1f273d]">
        <label
          htmlFor="range"
          className="-my-[2px] -ml-[2px] flex w-[84px] items-center justify-center rounded-l border-2 border-[#63cf9b] bg-[#22343d] text-gray-100"
        >
          15m
        </label>
        <div className="relative flex">
          <select id="range" className="w-[290px] appearance-none pl-4 outline-none">
            <option>Past 15 Minutes</option>
          </select>
          <ChevronDown className="pointer-events-none absolute top-[11px] right-5 size-6" />
        </div>
      </div>
      <button aria-label="Pause" className="ml-4 flex size-12 items-center justify-center gap-[6px] rounded border-2 border-[#37466f]">
        <span className="h-5 w-1 rounded-sm bg-slate-300" />
        <span className="h-5 w-1 rounded-sm bg-slate-300" />
      </button>
    </div>
  </header>
);

const tabs = ["APM", "Kubernetes", "Logs", "Events", "Profiling"];

const Tabs: FC = () => (
  <nav className="mx-auto grid h-[72px] w-[1236px] grid-cols-5 rounded border-2 border-[#37466f] text-[36px] font-medium">
    {tabs.map((tab) => (
      <a
        key={tab}
        href="#tab"
        className={
          tab === "Profiling"
            ? "-my-1 flex items-center justify-center border-2 border-[#6dd58c] bg-[#6dd58c]/12 text-gray-100"
            : "flex items-center justify-center text-slate-300"
        }
      >
        {tab}
      </a>
    ))}
  </nav>
);

const Toolbar: FC = () => (
  <div className="mt-8 flex items-stretch justify-between text-[28px] text-slate-300">
    <div className="flex gap-5">
      <div className="flex h-[72px] self-start rounded border-2 border-[#37466f] p-1">
        <button className="border-2 border-[#6dd58c] bg-[#21333b] px-6 text-gray-100">On-Cpu</button>
        <button className="px-7 text-gray-500">Off-cpu</button>
      </div>
      <button aria-label="Help" className="self-center text-[#5090f8]">
        <svg viewBox="0 0 42 42" className="size-[42px]" fill="none" stroke="currentColor" strokeWidth="2.5" strokeLinecap="round">
          <circle cx="21" cy="21" r="19.5" />
          <path d="M14.5 15.5c.5-3 3-5 6.500-5 4 0 6.800 2.300 6.800 5.600 0 4.700-6.800 5-6.800 9.400" strokeWidth="3" />
          <circle cx="21" cy="30.5" r="1.2" fill="currentColor" />
        </svg>
      </button>
    </div>
    <div className="flex h-24 gap-4">
      <div className="flex rounded border-2 border-[#37466f]">
        <label htmlFor="container" className="flex items-center border-r-2 border-[#37466f] px-4">
          container
        </label>
        <select id="container" className="w-[212px] appearance-none bg-[#1a2235] pl-4 outline-none">
          <option>All containers</option>
        </select>
      </div>
      <input
        aria-label="Search frames"
        defaultValue="logs"
        className="w-[512px] rounded border-2 border-[#5090f8] bg-transparent px-6 outline-none"
      />
    </div>
  </div>
);

const App: FC = () => {
  return (
    <div className="bg-black">
      <div className="relative flex min-h-screen overflow-hidden rounded-b-[20px] bg-[#191f30] font-[Inter,sans-serif]">
        <Sidebar />
        <div className="flex min-w-0 grow flex-col">
          <Header />
          <main className="px-8 pt-8">
            <Tabs />
            <Toolbar />
            <FlameGraph />
          </main>
        </div>
        <div className="pointer-events-none absolute inset-0 rounded-b-[20px] border border-t-0 border-[#343b4c]" />
      </div>
    </div>
  );
};

export default App;
